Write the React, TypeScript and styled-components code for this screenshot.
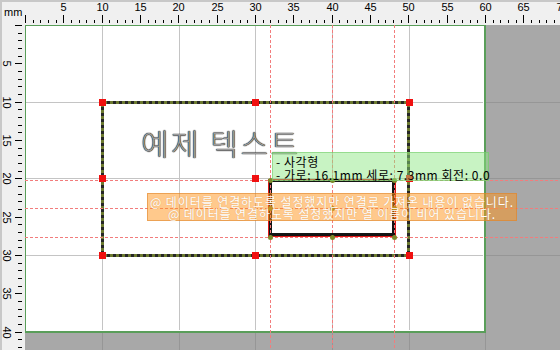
import React from 'react';
import styled, { createGlobalStyle } from 'styled-components';

const PX_PER_MM = 23 / 3;
const toPx = (mm: number) => Math.round(mm * PX_PER_MM);

const GlobalStyle = createGlobalStyle`
  html, body {
    margin: 0;
    padding: 0;
    background: #ffffff;
    overflow: hidden;
  }
  body {
    font-family: "Liberation Sans", "Noto Sans CJK KR", sans-serif;
  }
`;

const Designer = styled.div`
  display: grid;
  grid-template-columns: 25px 535px;
  grid-template-rows: 25px 325px;
  width: 560px;
  height: 350px;
  overflow: hidden;
`;

const Corner = styled.div`
  background: #f0f0f0;
  border-top: 2px solid #c8c8c8;
  border-left: 2px solid #c8c8c8;
  box-sizing: border-box;
  font-size: 11px;
  color: #000;
  padding: 5px 0 0 2px;
  line-height: 11px;
`;

const RulerBox = styled.div<{ $vertical?: boolean }>`
  background: #f0f0f0;
  box-sizing: border-box;
  overflow: hidden;
  ${(p) => (p.$vertical ? 'border-left: 2px solid #c8c8c8;' : 'border-top: 2px solid #c8c8c8;')}

  svg {
    display: block;
    font-family: "Liberation Sans", sans-serif;
    font-size: 11px;
  }
`;

const Workspace = styled.div`
  position: relative;
  background: #a8a8a8;
  overflow: hidden;
`;

const LabelCanvas = styled.div`
  position: absolute;
  left: 0;
  top: 0;
  width: 458px;
  height: 305px;
  background: #ffffff;
  border-top: 1px solid #5a9e5a;
  border-left: 1px solid #5a9e5a;
  border-right: 2px solid #5a9e5a;
  border-bottom: 2px solid #5a9e5a;
`;

const Layer = styled.svg`
  position: absolute;
  left: 0;
  top: 0;
  pointer-events: none;
`;

const SampleText = styled.div`
  position: absolute;
  left: 116px;
  top: 102px;
  font-family: "Noto Sans CJK KR", sans-serif;
  font-size: 30px;
  font-weight: 300;
  line-height: 30px;
  letter-spacing: 2.5px;
  color: #9c9c9c;
  white-space: nowrap;
  text-shadow: 0 0 1px #000, 0 0 1px #111;
`;

const edgeH = 'repeating-linear-gradient(90deg, #262626 0 3px, #6c7a30 3px 6px)';
const edgeV = 'repeating-linear-gradient(180deg, #262626 0 3px, #6c7a30 3px 6px)';

const TextFrame = styled.div`
  position: absolute;
  left: 76px;
  top: 76px;
  width: 309px;
  height: 156px;
  background:
    ${edgeH} top / 100% 3px no-repeat,
    ${edgeH} bottom / 100% 3px no-repeat,
    ${edgeV} left / 3px 100% no-repeat,
    ${edgeV} right / 3px 100% no-repeat;
`;

const ShapeObject = styled.div`
  position: absolute;
  left: 244px;
  top: 155px;
  width: 120px;
  height: 51px;
  background: #ffffff;
  border: 3px solid #141414;
  border-top-width: 2px;
  outline: 1px solid #e01818;
`;

const Handle = styled.div<{ $x: number; $y: number; $round?: boolean }>`
  position: absolute;
  left: ${(p) => p.$x - (p.$round ? 2.5 : 3.5)}px;
  top: ${(p) => p.$y - (p.$round ? 2.5 : 3.5)}px;
  width: ${(p) => (p.$round ? 5 : 7)}px;
  height: ${(p) => (p.$round ? 5 : 7)}px;
  border-radius: ${(p) => (p.$round ? '50%' : '0')};
  background: ${(p) => (p.$round ? '#7c8a2a' : '#f01010')};
`;

const Tip = styled.div`
  position: absolute;
  box-sizing: border-box;
  display: flex;
  flex-direction: column;
  font-family: "Noto Sans CJK KR", sans-serif;
  font-size: 12px;
  line-height: 12px;
  white-space: nowrap;
`;

const InfoTip = styled(Tip)`
  left: 247px;
  top: 127px;
  width: 217px;
  height: 29px;
  padding: 2px 0 0 3px;
  line-height: 13px;
  letter-spacing: 0.55px;
  color: #000;
  background: rgba(140, 230, 130, 0.48);
  border: 1px solid rgba(110, 200, 100, 0.55);
`;

const WarningTip = styled(Tip)`
  left: 122px;
  top: 168px;
  width: 370px;
  height: 28px;
  padding-top: 2px;
  align-items: center;
  letter-spacing: 0.9px;
  color: #ffffff;
  background: rgba(255, 147, 25, 0.5);
  border: 1px solid rgba(220, 130, 40, 0.55);
  text-shadow: 0 0 1px rgba(150, 80, 0, 0.35);
`;

const TopRuler = () => {
  const ticks = [];
  for (let mm = 0; mm <= 70; mm++) {
    const x = toPx(mm) + 0.5;
    const major = mm % 5 === 0;
    ticks.push(<line key={mm} x1={x} x2={x} y1={major ? 13 : 18} y2={21} stroke="#000" />);
    if (major && mm > 0) {
      ticks.push(
        <text key={`t${mm}`} x={x} y={9} textAnchor="middle" fill="#000">
          {mm}
        </text>
      );
    }
  }
  return (
    <RulerBox>
      <svg width={535} height={23}>{ticks}</svg>
    </RulerBox>
  );
};

const LeftRuler = () => {
  const ticks = [];
  for (let mm = 0; mm <= 43; mm++) {
    const y = toPx(mm) + 0.5;
    const major = mm % 5 === 0;
    ticks.push(<line key={mm} x1={major ? 13 : 16} x2={20} y1={y} y2={y} stroke="#000" />);
    if (major && mm > 0) {
      ticks.push(
        <text key={`t${mm}`} x={1} y={y} textAnchor="middle" fill="#000" transform={`rotate(90 1 ${y})`}>
          {mm}
        </text>
      );
    }
  }
  return (
    <RulerBox $vertical>
      <svg width={23} height={325}>{ticks}</svg>
    </RulerBox>
  );
};

const gridX = [77, 154, 230, 307, 384];
const gridY = [77, 153, 230];
const guideX = [245.5, 307.5, 369.5];
const guideY = [155.5, 183.5, 212.5];

const GridLayer = () => (
  <Layer width={535} height={325}>
    {gridX.map((x) => (
      <line key={`i${x}`} x1={x + 0.5} x2={x + 0.5} y1={1} y2={305} stroke="#c4c4c4" />
    ))}
    {[...gridX, 460].map((x) => (
      <line key={`o${x}`} x1={x + 0.5} x2={x + 0.5} y1={308} y2={325} stroke="#969696" />
    ))}
    {gridY.map((y) => (
      <React.Fragment key={y}>
        <line x1={1} x2={458} y1={y + 0.5} y2={y + 0.5} stroke="#c4c4c4" />
        <line x1={461} x2={535} y1={y + 0.5} y2={y + 0.5} stroke="#969696" />
      </React.Fragment>
    ))}
  </Layer>
);

const GuideLayer = () => (
  <Layer width={535} height={325}>
    {guideX.map((x) => (
      <line key={x} x1={x} x2={x} y1={0} y2={325} stroke="#f27c7c" strokeDasharray="3 2" />
    ))}
    {guideY.map((y) => (
      <line key={y} x1={0} x2={535} y1={y} y2={y} stroke="#f27c7c" strokeDasharray="3 2" />
    ))}
  </Layer>
);

const frameHandles: [number, number][] = [
  [77, 77], [230, 77], [384, 77],
  [77, 153], [230, 153], [384, 153],
  [77, 230], [230, 230], [384, 230],
];

const shapeHandles: [number, number][] = [];
[155, 183, 212].forEach((y) => [245, 307, 369].forEach((x) => shapeHandles.push([x, y])));

export default function App() {
  return (
    <>
      <GlobalStyle />
      <Designer>
        <Corner>mm</Corner>
        <TopRuler />
        <LeftRuler />
        <Workspace>
          <LabelCanvas />
          <GridLayer />
          <SampleText>예제 텍스트</SampleText>
          <TextFrame />
          <ShapeObject />
          <GuideLayer />
          {frameHandles.map(([x, y]) => (
            <Handle key={`f${x}-${y}`} $x={x} $y={y} />
          ))}
          {shapeHandles.map(([x, y]) => (
            <Handle key={`s${x}-${y}`} $x={x} $y={y} $round />
          ))}
          <InfoTip>
            <span>- 사각형</span>
            <span>- 가로: 16.1mm 세로: 7.3mm 회전: 0.0</span>
          </InfoTip>
          <WarningTip>
            <span>@ 데이터를 연결하도록 설정했지만 연결로 가져온 내용이 없습니다.</span>
            <span>@ 데이터를 연결하도록 설정했지만 열 이름이 비어 있습니다.</span>
          </WarningTip>
        </Workspace>
      </Designer>
    </>
  );
}
